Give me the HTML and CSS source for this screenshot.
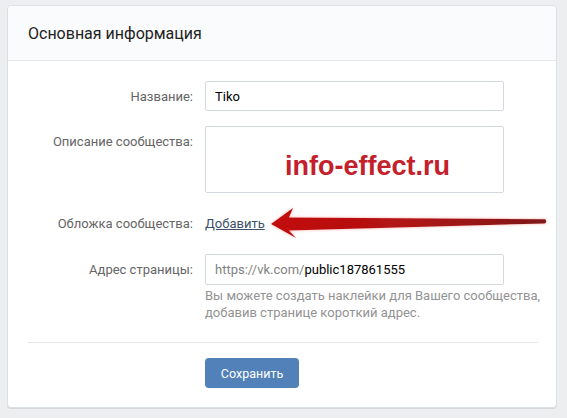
FILE: index.html
```html
<!DOCTYPE html>
<html lang="ru">
<head>
<meta charset="utf-8">
<title>Основная информация</title>
<link rel="stylesheet" href="styles.css">
</head>
<body>
<div class="card">
  <div class="card-head">Основная информация</div>
  <div class="card-body">
    <div class="form">
      <div class="label">Название:</div>
      <div class="field"><div class="input">Tiko</div></div>

      <div class="label label-top">Описание сообщества:</div>
      <div class="field"><div class="textarea"><span class="watermark">info-effect.ru</span></div></div>

      <div class="label">Обложка сообщества:</div>
      <div class="field field-tall"><a class="link" href="#">Добавить</a></div>

      <div class="label">Адрес страницы:</div>
      <div class="field">
        <div class="input input-addr"><span class="prefix">https://vk.com/</span>public187861555</div>
      </div>

      <div></div>
      <div class="help">Вы можете создать наклейки для Вашего сообщества,<br>добавив странице короткий адрес.</div>
    </div>
    <div class="divider"></div>
    <div class="actions">
      <button class="btn" type="button">Сохранить</button>
    </div>
  </div>
</div>
<svg class="arrow" width="567" height="418" viewBox="0 0 567 418" xmlns="http://www.w3.org/2000/svg">
  <defs>
    <linearGradient id="shaft" x1="272" y1="0" x2="546" y2="0" gradientUnits="userSpaceOnUse">
      <stop offset="0" stop-color="#c20d0d"/>
      <stop offset="0.5" stop-color="#b01313"/>
      <stop offset="1" stop-color="#7e1a1a"/>
    </linearGradient>
    <filter id="glow" x="-10%" y="-50%" width="120%" height="200%">
      <feGaussianBlur in="SourceAlpha" stdDeviation="1.4" result="b"/>
      <feFlood flood-color="#ff6a6a" flood-opacity="0.55"/>
      <feComposite in2="b" operator="in" result="g"/>
      <feMerge><feMergeNode in="g"/><feMergeNode in="SourceGraphic"/></feMerge>
    </filter>
  </defs>
  <path filter="url(#glow)" fill="url(#shaft)" d="M271 224 L293 208 L289 217.5 L545 219.2 Q547.5 221.2 545 223.4 L289 230.5 L296 238 Z"/>
</svg>
</body>
</html>
```
FILE: styles.css
```css
html, body {
  margin: 0;
  padding: 0;
}
body {
  background: #edeef0;
  font-family: Roboto, "Open Sans", "DejaVu Sans", sans-serif;
  font-size: 13px;
  line-height: 17px;
  color: #000;
  width: 567px;
  height: 418px;
  overflow: hidden;
  position: relative;
}
.card {
  box-sizing: border-box;
  width: 550px;
  margin: 5px 0 0 7px;
  background: #fff;
  border: 1px solid #dce1e6;
  border-radius: 4px;
  box-shadow: 0 1px 0 0 #d7d8db;
}
.card-head {
  height: 54px;
  display: flex;
  align-items: center;
  padding-left: 20px;
  background: #fafbfc;
  border-bottom: 1px solid #e7e8ec;
  border-radius: 4px 4px 0 0;
  font-size: 16px;
  color: #222;
}
.card-body {
  padding: 20px 18px 19px 20px;
}
.form {
  display: grid;
  grid-template-columns: 165px 1fr;
  column-gap: 12px;
  row-gap: 15px;
  align-items: center;
}
.label {
  text-align: right;
  color: #656565;
}
.label-top {
  align-self: start;
  padding-top: 7px;
}
.input {
  box-sizing: border-box;
  width: 299px;
  height: 30px;
  border: 1px solid #d3d9de;
  border-radius: 2px;
  padding: 0 9px;
  display: flex;
  align-items: center;
  color: #000;
  background: #fff;
}
.input-addr {
  height: 31px;
}
.prefix {
  color: #828282;
}
.textarea {
  box-sizing: border-box;
  width: 299px;
  height: 67px;
  border: 1px solid #d3d9de;
  border-radius: 2px;
  display: flex;
  align-items: center;
  justify-content: center;
  padding: 12px 0 0 26px;
}
.watermark {
  font-family: "Liberation Sans", Arial, sans-serif;
  font-weight: bold;
  font-size: 27px;
  line-height: 30px;
  color: #c4202b;
}
.field {
  min-height: 30px;
  display: flex;
  flex-direction: column;
  justify-content: center;
}
.field-tall {
  height: 31px;
}
.link {
  color: #3b5169;
  text-decoration: underline;
  align-self: flex-start;
}
.help {
  margin-top: -13px;
  color: #939393;
  line-height: 17px;
  white-space: nowrap;
}
.divider {
  height: 1px;
  background: #e7e8ec;
  margin-top: 21px;
}
.actions {
  padding-top: 15px;
  padding-left: 177px;
}
.btn {
  box-sizing: border-box;
  width: 94px;
  height: 30px;
  border: 0;
  border-radius: 4px;
  background: #5181b8;
  color: #fff;
  font-family: Roboto, "Open Sans", sans-serif;
  font-size: 12.5px;
  font-weight: 400;
  padding: 0;
  display: block;
}
.arrow {
  position: absolute;
  left: 0;
  top: 0;
  pointer-events: none;
}
```
